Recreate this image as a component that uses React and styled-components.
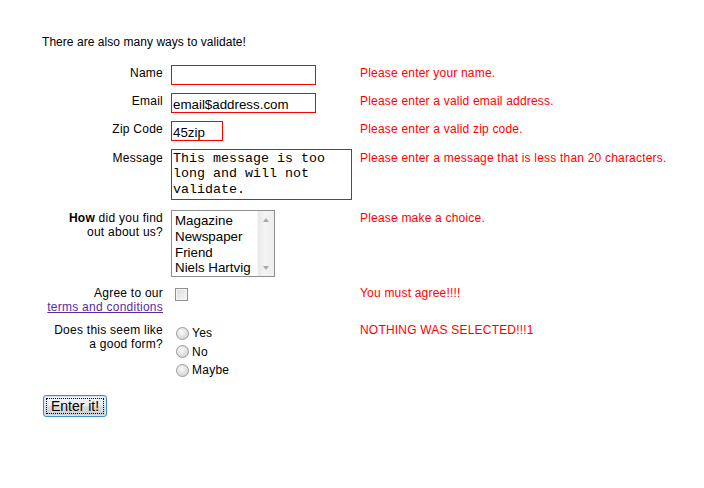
import React from 'react';
import styled, { createGlobalStyle } from 'styled-components';

const GlobalStyle = createGlobalStyle`
  html, body {
    margin: 0;
    background: #fff;
  }
  body {
    font-family: "Liberation Sans", Arial, sans-serif;
    font-size: 12px;
    color: #000;
  }
`;

const Page = styled.div`
  padding: 35px 0 0 42px;
`;

const Intro = styled.p`
  margin: 0 0 16px;
  line-height: 14px;
  letter-spacing: 0.05px;
`;

const FormGrid = styled.form`
  display: grid;
  grid-template-columns: 121px 181px auto;
  column-gap: 8px;
  row-gap: 8px;
  align-items: start;
`;

const Label = styled.label`
  text-align: right;
  line-height: 14px;
  letter-spacing: 0.25px;
  margin-top: ${(p) => p.$offset ?? 1}px;

  b {
    font-weight: bold;
  }

  a {
    color: #5a2a9e;
    text-decoration: underline;
  }
`;

const Cell = styled.div`
  display: flex;
  flex-direction: column;
  align-items: flex-start;
`;

const TextInput = styled.input`
  box-sizing: border-box;
  width: ${(p) => p.$width}px;
  height: 20px;
  margin: 0;
  padding: 2px 1px 0;
  border: 1px solid #f00;
  font-family: "Liberation Sans", Arial, sans-serif;
  font-size: 13.33px;
  color: #000;
  outline: none;
`;

const TextArea = styled.textarea`
  box-sizing: border-box;
  width: 181px;
  height: 51px;
  margin: 0 0 1px;
  padding: 1px 1px;
  border: 1px solid #f00;
  font-family: "Liberation Mono", "Courier New", monospace;
  font-size: 13.33px;
  line-height: 15.4px;
  color: #000;
  resize: none;
  overflow: hidden;
  outline: none;
`;

const ListBox = styled.div`
  box-sizing: border-box;
  width: 104px;
  height: 67px;
  margin-top: 1px;
  border: 1px solid #8e8f8f;
  display: flex;
  background: #fff;
`;

const Options = styled.ul`
  flex: 1;
  list-style: none;
  margin: 0;
  padding: 2px 0 0 3px;
  font-size: 13.33px;
  line-height: 15.8px;
  white-space: nowrap;
  overflow: hidden;
`;

const ScrollTrack = styled.div`
  width: 17px;
  background: linear-gradient(90deg, #e8e8e8, #f4f4f4 40%, #eeeeee);
  border-left: 1px solid #f6f6f6;
  display: flex;
  flex-direction: column;
  justify-content: space-between;
  align-items: center;
  padding: 7px 0 6px;
  box-sizing: border-box;
`;

const Arrow = styled.span`
  width: 0;
  height: 0;
  border-left: 3.5px solid transparent;
  border-right: 3.5px solid transparent;
  ${(p) =>
    p.$down ? 'border-top: 4px solid #a8a8a8;' : 'border-bottom: 4px solid #a8a8a8;'}
`;

const Check = styled.input`
  appearance: none;
  width: 13px;
  height: 13px;
  margin: 3px 3px 3px 4px;
  border: 1px solid #8f8f8f;
  background: linear-gradient(135deg, #dcdcdc, #f6f6f6);
  box-shadow: inset 0 0 0 1px #f4f4f4;
  box-sizing: border-box;
`;

const RadioGroup = styled.div`
  display: flex;
  flex-direction: column;
  padding-top: 2px;
`;

const RadioLine = styled.label`
  display: flex;
  align-items: center;
  height: 18.5px;
  line-height: 14px;
  letter-spacing: 0.25px;
`;

const Radio = styled.input`
  appearance: none;
  width: 13px;
  height: 13px;
  margin: 0 3px 0 5px;
  border-radius: 50%;
  border: 1px solid #9a9a9a;
  background: radial-gradient(circle at 40% 35%, #fafafa, #d8d8d8 70%, #c8c8c8);
  box-sizing: border-box;
`;

const ErrorText = styled.span`
  color: #f00;
  line-height: 14px;
  letter-spacing: 0.2px;
  white-space: nowrap;
  margin-top: ${(p) => p.$offset ?? 1}px;
`;

const Submit = styled.button`
  margin: 15px 0 0 1px;
  width: 64px;
  height: 22px;
  padding: 2px;
  border: 1px solid #3c8fd0;
  border-radius: 3px;
  background: linear-gradient(#f4f4f4 0%, #ececec 50%, #dddddd 51%, #cfcfcf 100%);
  box-shadow: inset 0 0 0 1px #c9e8fb;
  font-family: "Liberation Sans", Arial, sans-serif;
  font-size: 14px;
  color: #000;
  cursor: pointer;
`;

const FocusRing = styled.span`
  display: block;
  height: 100%;
  box-sizing: border-box;
  border: 1px dotted #000;
  line-height: 14px;
`;

const choices = ['Magazine', 'Newspaper', 'Friend', 'Niels Hartvig'];

export default function App() {
  return (
    <Page>
      <GlobalStyle />
      <Intro>There are also many ways to validate!</Intro>
      <FormGrid onSubmit={(e) => e.preventDefault()}>
        <Label>Name</Label>
        <Cell>
          <TextInput $width={145} defaultValue="" />
        </Cell>
        <ErrorText>Please enter your name.</ErrorText>

        <Label>Email</Label>
        <Cell>
          <TextInput $width={145} defaultValue="email$address.com" />
        </Cell>
        <ErrorText>Please enter a valid email address.</ErrorText>

        <Label>Zip Code</Label>
        <Cell>
          <TextInput $width={52} defaultValue="45zip" />
        </Cell>
        <ErrorText>Please enter a valid zip code.</ErrorText>

        <Label $offset={2}>Message</Label>
        <Cell>
          <TextArea defaultValue="This message is too long and will not validate." />
        </Cell>
        <ErrorText $offset={2}>Please enter a message that is less than 20 characters.</ErrorText>

        <Label $offset={2}>
          <b>How</b> did you find
          <br />
          out about us?
        </Label>
        <Cell>
          <ListBox>
            <Options>
              {choices.map((c) => (
                <li key={c}>{c}</li>
              ))}
            </Options>
            <ScrollTrack>
              <Arrow />
              <Arrow $down />
            </ScrollTrack>
          </ListBox>
        </Cell>
        <ErrorText $offset={2}>Please make a choice.</ErrorText>

        <Label>
          Agree to our
          <br />
          <a href="#terms">terms and conditions</a>
        </Label>
        <Cell>
          <Check type="checkbox" />
        </Cell>
        <ErrorText>You must agree!!!!</ErrorText>

        <Label>
          Does this seem like
          <br />
          a good form?
        </Label>
        <RadioGroup>
          <RadioLine>
            <Radio type="radio" name="good" />
            Yes
          </RadioLine>
          <RadioLine>
            <Radio type="radio" name="good" />
            No
          </RadioLine>
          <RadioLine>
            <Radio type="radio" name="good" />
            Maybe
          </RadioLine>
        </RadioGroup>
        <ErrorText>NOTHING WAS SELECTED!!!1</ErrorText>
      </FormGrid>
      <Submit type="submit">
        <FocusRing>Enter it!</FocusRing>
      </Submit>
    </Page>
  );
}
